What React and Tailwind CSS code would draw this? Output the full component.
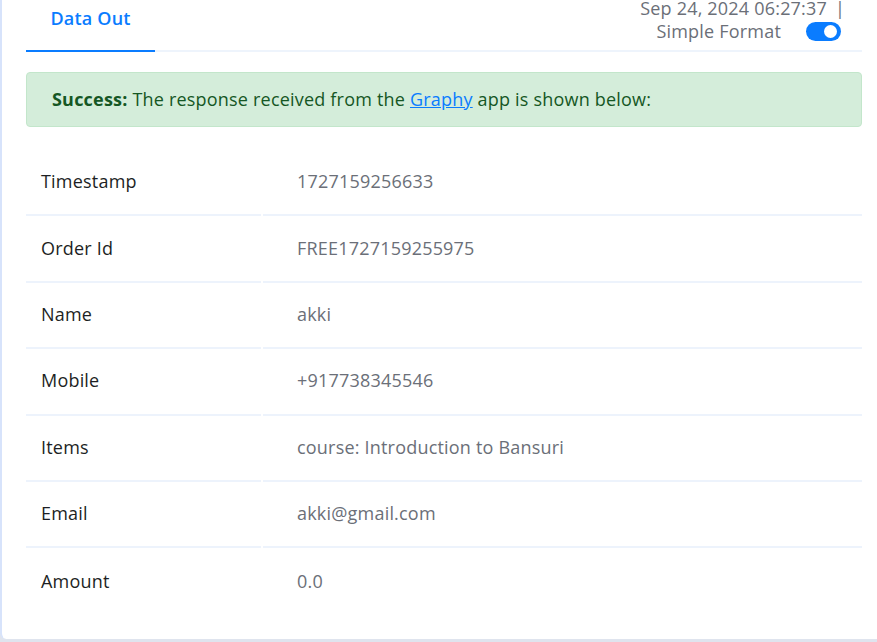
import { useState } from "react";

const rows = [
  ["Timestamp", "1727159256633"],
  ["Order Id", "FREE1727159255975"],
  ["Name", "akki"],
  ["Mobile", "+917738345546"],
  ["Items", "course: Introduction to Bansuri"],
  ["Email", "akki@gmail.com"],
  ["Amount", "0.0"],
];

function Toggle({ on, onChange }) {
  return (
    <button
      onClick={() => onChange(!on)}
      className={`relative h-[19px] w-[35px] rounded-full ${on ? "bg-[#0a7cff]" : "bg-gray-300"}`}
    >
      <span
        className={`absolute top-[3px] h-[13px] w-[13px] rounded-full bg-white ${on ? "right-[4px]" : "left-[4px]"}`}
      />
    </button>
  );
}

export default function App() {
  const [simple, setSimple] = useState(true);

  return (
    <div className="h-[642px] overflow-hidden bg-[#dfe4ee] font-['Open_Sans',sans-serif] tracking-[0.2px]">
      <div className="h-[639px] w-[900px] rounded-bl-md border-l-2 border-[#d7e3fb] bg-white px-[24px]">
        <div className="flex items-start justify-between border-b-2 border-[#eef4fc] w-[836px]">
          <div className="-mb-[2px] w-[129px] border-b-2 border-[#0a7cff] pt-[7px] pb-[20px] text-center text-[18px] leading-[23px] font-semibold text-[#0a7cff]">
            Data Out
          </div>
          <div className="mr-[17px] -mt-[3px] flex flex-col items-end text-[18px] leading-[23px] text-[#6b6f78]">
            <div>
              Sep 24, 2024 06:27:37 <span className="ml-[3px]">|</span>
            </div>
            <div className="flex items-center gap-[25px] pr-[4px]">
              <span>Simple Format</span>
              <Toggle on={simple} onChange={setSimple} />
            </div>
          </div>
        </div>

        <div className="mt-[20px] w-[836px] rounded-[4px] border border-[#c3e6cb] bg-[#d4edda] px-[25px] py-[15px] text-[18px] leading-[23px] text-[#155724]">
          <span className="font-bold">Success:</span> The response received from the{" "}
          <a href="#" className="text-[#0a7cff] underline">
            Graphy
          </a>{" "}
          app is shown below:
        </div>

        <table className="mt-[23px] w-[840px] -ml-[2px] border-separate border-spacing-[2px] text-[18px]">
          <tbody>
            {rows.map(([label, value], i) => {
              const last = i === rows.length - 1;
              return (
                <tr key={label}>
                  <td
                    className={`w-[235px] h-[64.4px] pb-[3px] pl-[15px] text-[#1d1f24] ${last ? "" : "border-b-2 border-[#edf3fc]"}`}
                  >
                    {label}
                  </td>
                  <td
                    className={`h-[64.4px] pb-[3px] pl-[34px] text-[#6b6f78] ${last ? "" : "border-b-2 border-[#edf3fc]"}`}
                  >
                    {value}
                  </td>
                </tr>
              );
            })}
          </tbody>
        </table>
      </div>
    </div>
  );
}
